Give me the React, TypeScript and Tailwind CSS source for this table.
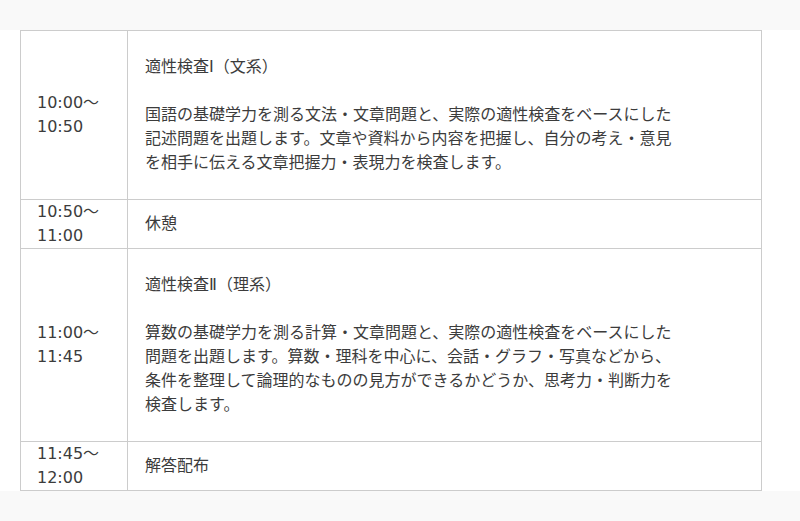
import React from 'react';

interface Row {
  time: [string, string];
  title?: string;
  body: string[];
}

const rows: Row[] = [
  {
    time: ['10:00〜', '10:50'],
    title: '適性検査Ⅰ（文系）',
    body: [
      '国語の基礎学力を測る文法・文章問題と、実際の適性検査をベースにした',
      '記述問題を出題します。文章や資料から内容を把握し、自分の考え・意見',
      'を相手に伝える文章把握力・表現力を検査します。',
    ],
  },
  { time: ['10:50〜', '11:00'], body: ['休憩'] },
  {
    time: ['11:00〜', '11:45'],
    title: '適性検査Ⅱ（理系）',
    body: [
      '算数の基礎学力を測る計算・文章問題と、実際の適性検査をベースにした',
      '問題を出題します。算数・理科を中心に、会話・グラフ・写真などから、',
      '条件を整理して論理的なものの見方ができるかどうか、思考力・判断力を',
      '検査します。',
    ],
  },
  { time: ['11:45〜', '12:00'], body: ['解答配布'] },
];

const App: React.FC = () => {
  return (
    <div
      className="min-h-[521px] bg-[#f9f9f9] pt-[30px] text-[16px] leading-[24px] text-[#3c3c3c]"
      style={{ fontFamily: '"DejaVu Sans", "Noto Sans CJK JP", sans-serif' }}
    >
      <div className="bg-white pl-[20px] pr-[38px]">
        <table className="w-full border-collapse">
          <tbody>
            {rows.map((row, i) => (
              <tr key={i}>
                <td className="w-[107px] border border-[#cccccc] pl-[16px] pr-[8px] py-0 align-middle">
                  {row.time[0]}
                  <br />
                  {row.time[1]}
                </td>
                <td
                  className={
                    row.title
                      ? 'border border-[#cccccc] px-[17px] py-[24px] align-middle'
                      : 'border border-[#cccccc] px-[17px] py-0 align-middle'
                  }
                >
                  {row.title && <p className="mb-[24px]">{row.title}</p>}
                  <p>
                    {row.body.map((line, j) => (
                      <React.Fragment key={j}>
                        {j > 0 && <br />}
                        {line}
                      </React.Fragment>
                    ))}
                  </p>
                </td>
              </tr>
            ))}
          </tbody>
        </table>
      </div>
    </div>
  );
};

export default App;
